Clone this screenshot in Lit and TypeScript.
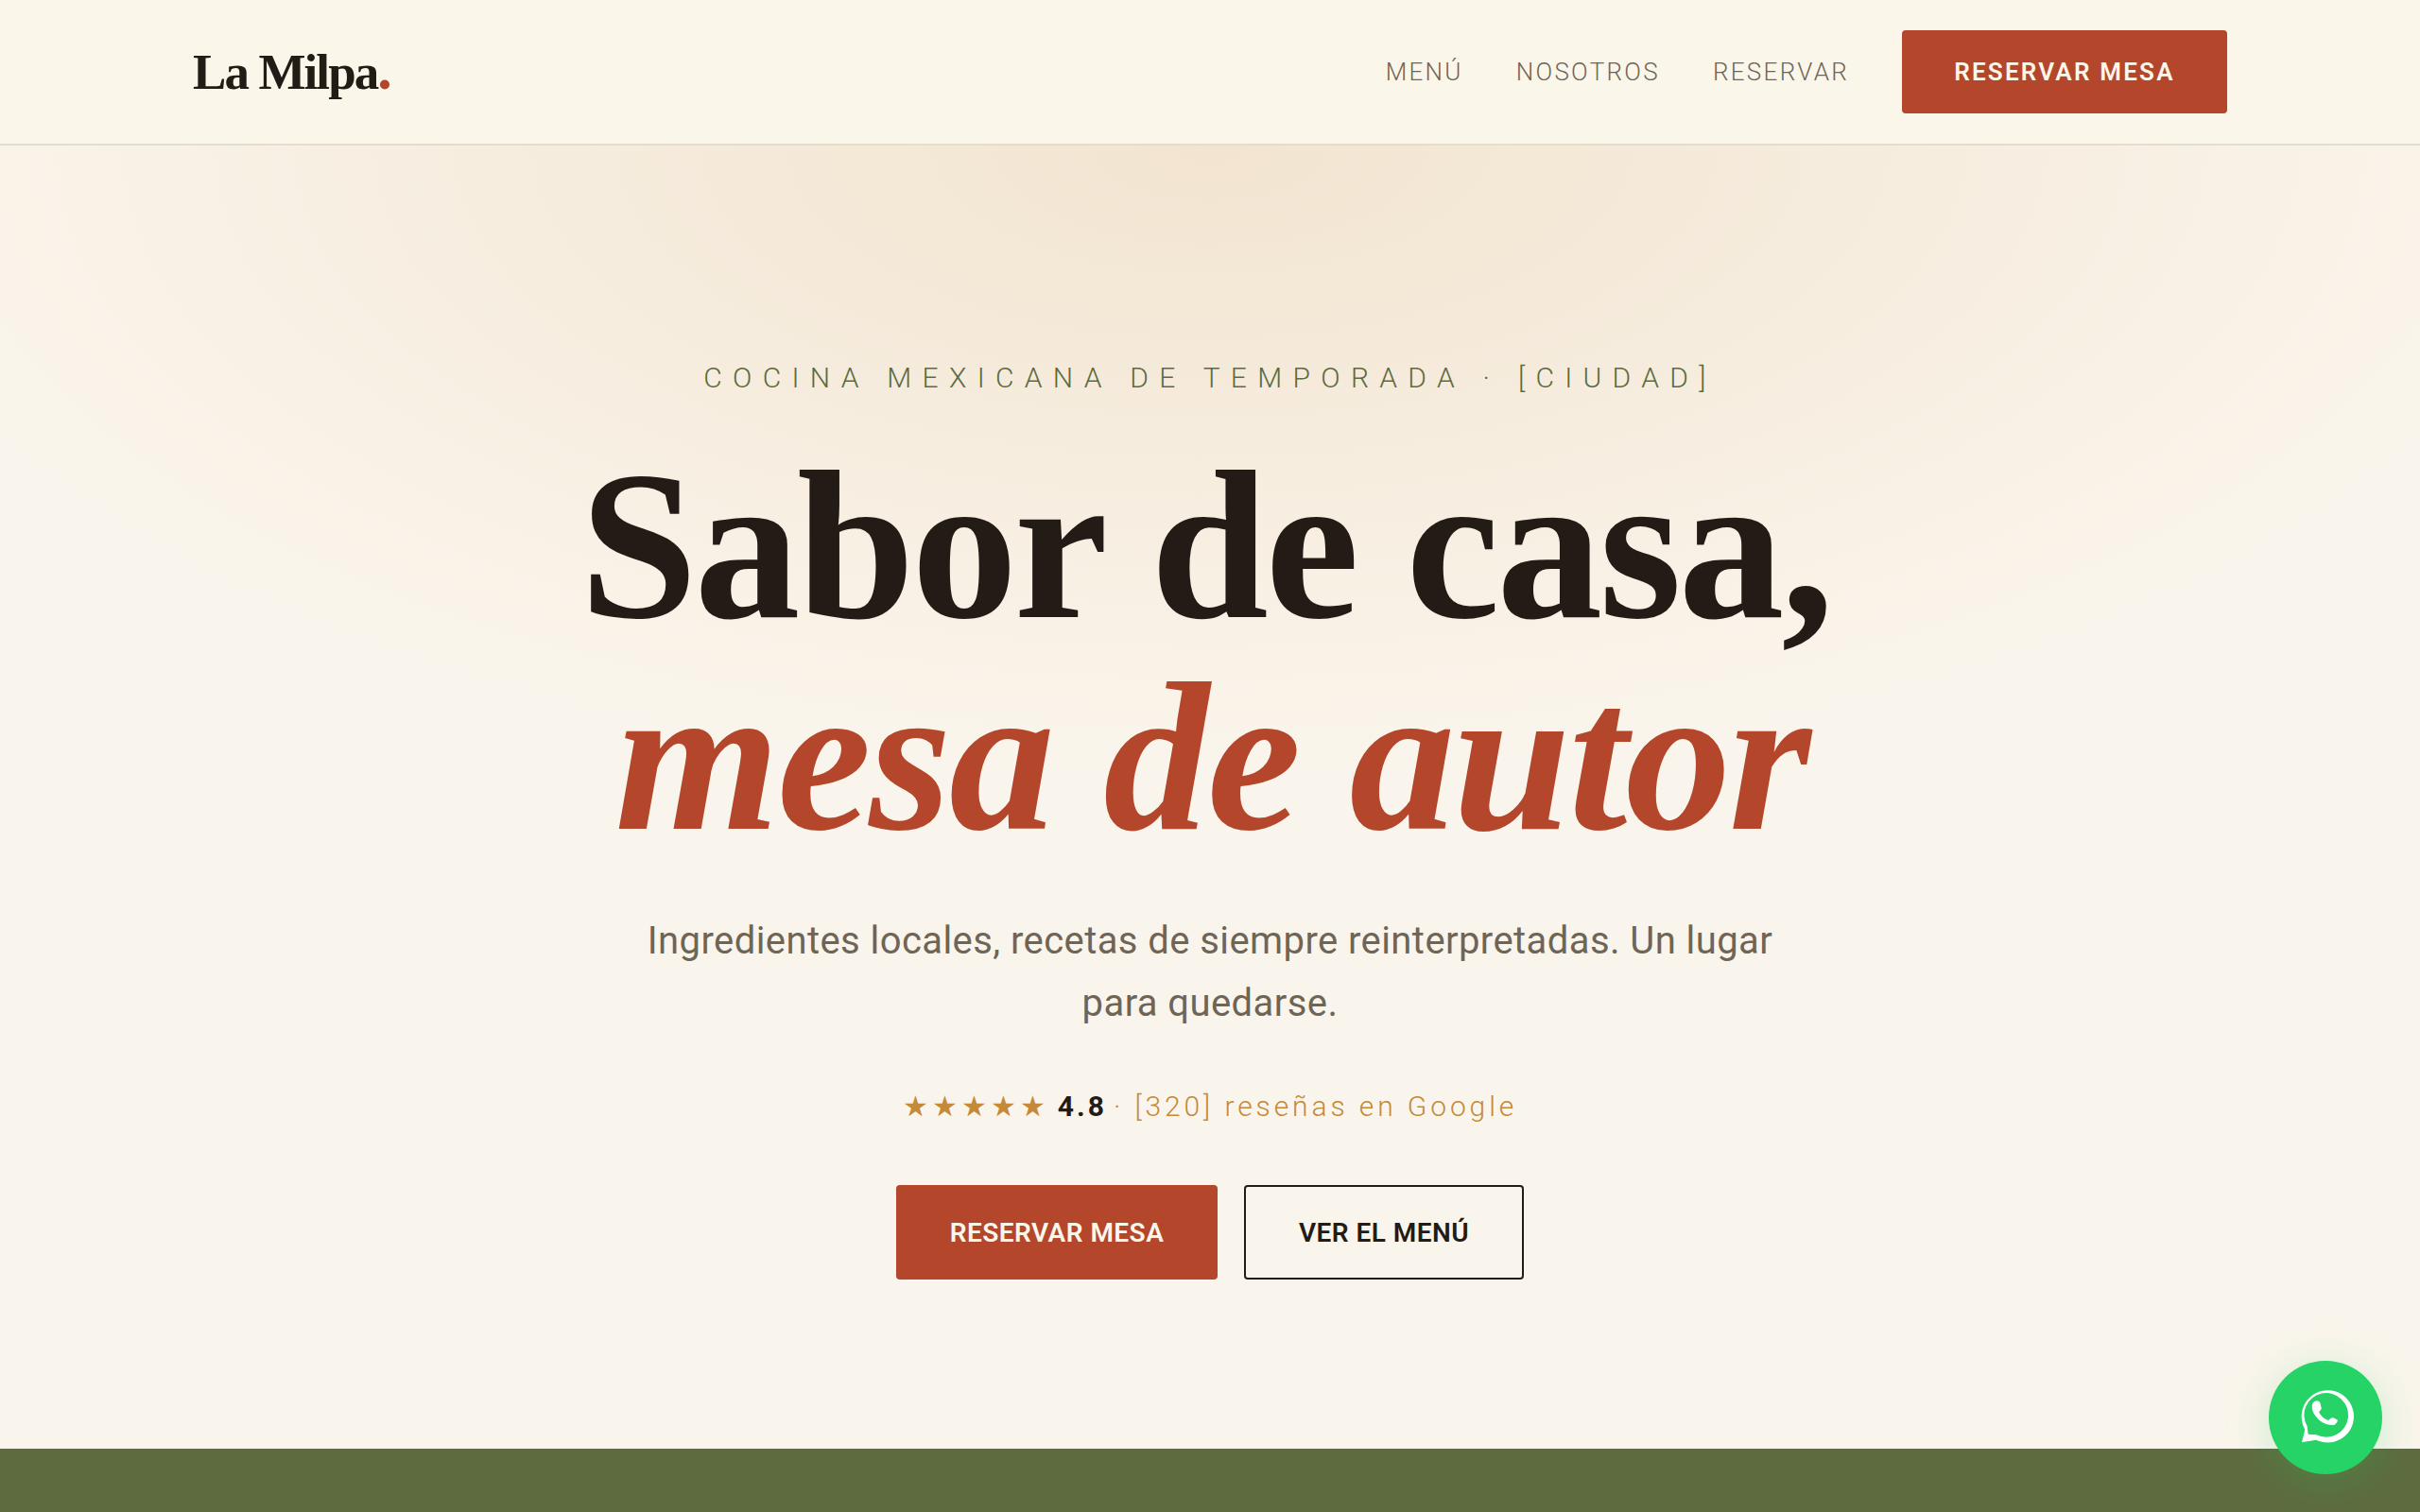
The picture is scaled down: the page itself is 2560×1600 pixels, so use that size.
import { LitElement, html, css } from "lit";
import { customElement } from "lit/decorators.js";

const sans = css`"Roboto", "Liberation Sans", sans-serif`;

@customElement("app-root")
export class AppRoot extends LitElement {
  static styles = css`
    :host { display: block; height: 1600px; overflow: hidden; position: relative; background: #faf5ec; font-family: ${sans}; }
    * { box-sizing: border-box; }
    .page { display: flex; flex-direction: column; height: 1600px; }
    header { flex: none; height: 154px; display: flex; align-items: center; justify-content: space-between; padding: 0 204px; background: #fbf6ea; border-bottom: 2px solid #e4dccc; }
    .logo { font-family: "Liberation Serif", serif; font-weight: 700; font-size: 53px; line-height: 60px; letter-spacing: -1.9px; color: #231b15; }
    .logo span { color: #b3462b; font-size: 62px; line-height: 0; }
    nav { display: flex; align-items: center; gap: 56px; }
    nav a { font-size: 26px; letter-spacing: 2.3px; color: #6f6557; font-weight: 300; }
    .btn { display: flex; align-items: center; justify-content: center; border-radius: 4px; font-weight: 600; }
    nav a.nav-btn { width: 344px; height: 88px; background: #b3462b; color: #fbf6ea; font-size: 26px; letter-spacing: 2.2px; font-weight: 600; }
    .hero { flex: 1; display: flex; flex-direction: column; align-items: center; padding-top: 226px;
      background: radial-gradient(ellipse 1792px 827px at 50% 0, #f2e4d0 0%, rgba(242,228,208,0) 80%), #faf5ec; }
    .eyebrow { font-size: 30px; line-height: 40px; letter-spacing: 11.3px; color: #5e6b3e; font-weight: 300; }
    h1 { margin: 45px 0 0; font-family: "Liberation Serif", serif; font-weight: 700; font-size: 224px; line-height: 224px; letter-spacing: -3.4px; text-align: center; color: #231b15; }
    h1 .first { display: block; margin-right: 10px; }
    h1 em { display: block; margin-left: 4px; letter-spacing: -2.4px; color: #b3462b; font-style: italic; }
    .sub { margin: 50px 0 0; width: 1220px; text-align: center; font-size: 40px; line-height: 66px; letter-spacing: 0.42px; color: #6f6557; font-weight: 400; }
    .rating { margin-top: 58px; display: flex; align-items: center; font-size: 30px; letter-spacing: 3.9px; color: #c48a38; font-weight: 300; white-space: pre; }
    .stars { letter-spacing: 4px; font-size: 30px; font-family: "DejaVu Sans", sans-serif; }
    .rating b { color: #231b15; font-weight: 700; letter-spacing: 3px; margin: 0 7px 0 9px; }
    .cta { margin-top: 66px; display: flex; gap: 28px; }
    .cta .btn { height: 100px; font-size: 28px; letter-spacing: 0.46px; }
    .primary { width: 340px; background: #b3462b; color: #fbf6ea; }
    .ghost { width: 296px; border: 2px solid #231b15; color: #231b15; }
    .band { flex: none; height: 67px; background: #5e6b3e; }
    .wa { position: absolute; right: 40px; bottom: 40px; width: 120px; height: 120px; border-radius: 50%; background: #25d366; display: flex; align-items: center; justify-content: center; box-shadow: 0 8px 48px rgba(37,211,102,.22); }
    .wa svg { width: 70px; height: 70px; display: block; }
    .wa path { fill: #fff; fill-rule: evenodd; }
  `;
  render() {
    return html`<div class="page">
      <header>
        <div class="logo">La Milpa<span>.</span></div>
        <nav>
          <a>MENÚ</a><a>NOSOTROS</a><a>RESERVAR</a>
          <a class="btn nav-btn">RESERVAR MESA</a>
        </nav>
      </header>
      <section class="hero">
        <div class="eyebrow">COCINA MEXICANA DE TEMPORADA · [CIUDAD]</div>
        <h1><span class="first">Sabor de casa,</span><em>mesa de autor</em></h1>
        <p class="sub">Ingredientes locales, recetas de siempre reinterpretadas. Un lugar para quedarse.</p>
        <div class="rating"><span class="stars">★★★★★</span><b>4.8</b><span>· [320] reseñas en Google</span></div>
        <div class="cta"><a class="btn primary">RESERVAR MESA</a><a class="btn ghost">VER EL MENÚ</a></div>
      </section>
      <div class="band"></div>
    </div>
    <a class="wa"><svg viewBox="0 0 210 210"><path d="M30 184 L40 143 A83 83 0 1 1 75 176 Z M50 158 L76 160 A70 70 0 1 0 47 133 Z"/><path d="M66 58 C72 50 84 50 88 58 L92 74 C93 80 86 84 84 88 C90 100 100 110 114 114 C118 110 124 104 130 106 L142 112 C146 116 140 124 134 128 C112 132 84 120 68 92 C62 80 60 66 66 58 Z"/></svg></a>`;
  }
}
